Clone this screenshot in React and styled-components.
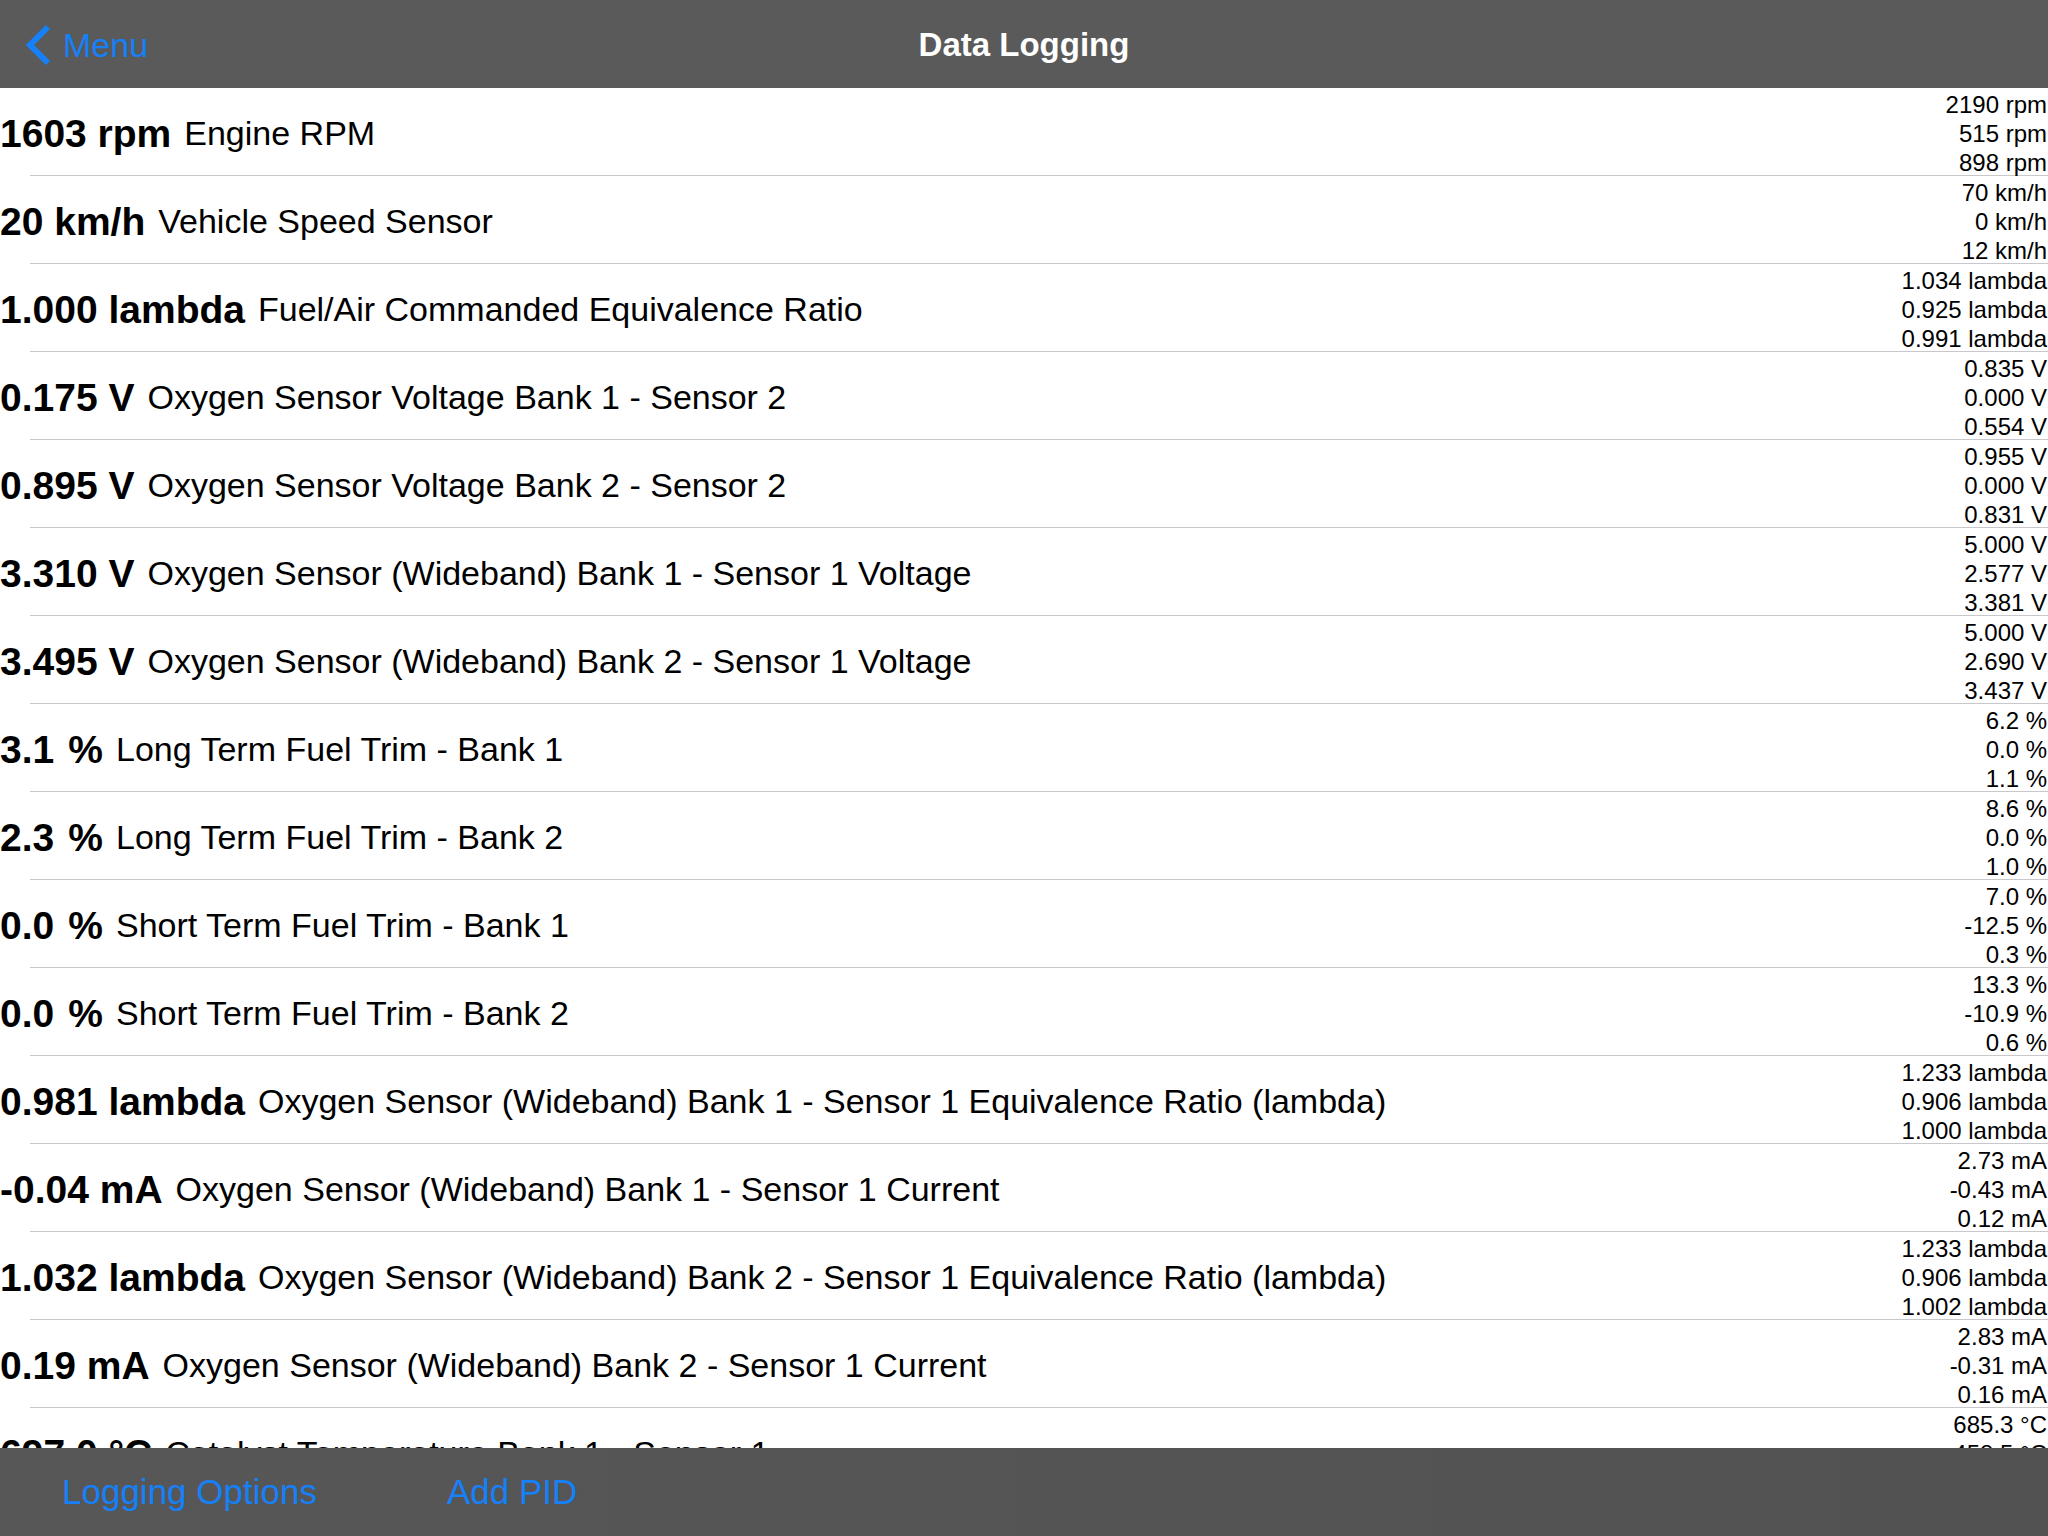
import React from "react";
import styled, { createGlobalStyle } from "styled-components";

const GlobalStyle = createGlobalStyle`
  html, body {
    margin: 0;
    padding: 0;
    background: #ffffff;
  }
  body {
    font-family: "Liberation Sans", Helvetica, Arial, sans-serif;
    color: #000;
    overflow: hidden;
  }
  * { box-sizing: border-box; }
`;

const Screen = styled.div`
  width: 100vw;
  height: 100vh;
  display: flex;
  flex-direction: column;
  overflow: hidden;
`;

const NavBar = styled.header`
  flex: 0 0 88px;
  height: 88px;
  background: #5a5a5a;
  display: grid;
  grid-template-columns: 1fr auto 1fr;
  align-items: center;
`;

const BackButton = styled.button`
  justify-self: start;
  display: flex;
  align-items: center;
  gap: 11px;
  padding: 2px 0 0 24px;
  margin: 0;
  border: 0;
  background: none;
  color: #1580f8;
  font-family: inherit;
  font-size: 34px;
  cursor: pointer;
`;

const Title = styled.h1`
  margin: 0;
  padding-top: 2px;
  color: #ffffff;
  font-size: 33px;
  font-weight: 700;
`;

const List = styled.main`
  flex: 1 1 auto;
  min-height: 0;
  overflow: hidden;
  background: #ffffff;
`;

const Row = styled.div`
  height: 88px;
  display: flex;
  align-items: stretch;
  background: linear-gradient(#c8c7cc, #c8c7cc) no-repeat 30px 100% / calc(100% - 30px) 1px;
`;

const Reading = styled.div`
  flex: 1 1 auto;
  min-width: 0;
  display: flex;
  align-items: center;
  white-space: nowrap;
  overflow: hidden;
  padding-top: 3px;
`;

const Value = styled.span`
  font-size: 39px;
  font-weight: 700;
`;

const Label = styled.span`
  margin-left: 13px;
  font-size: 34px;
`;

const Stats = styled.div`
  flex: 0 0 auto;
  display: flex;
  flex-direction: column;
  justify-content: flex-start;
  padding: 3px 1px 0 0;
  text-align: right;
  font-size: 24px;
  line-height: 28.8px;
  white-space: nowrap;
`;

const ToolBar = styled.footer`
  flex: 0 0 88px;
  height: 88px;
  background: linear-gradient(90deg, #575757, #545454 60%, #525252);
  display: flex;
  align-items: center;
  gap: 130px;
  padding-left: 62px;
`;

const ToolButton = styled.button`
  margin: 0;
  padding: 0;
  border: 0;
  background: none;
  color: #1580f8;
  font-family: inherit;
  font-size: 35px;
  cursor: pointer;
`;

const BackChevron = () => (
  <svg width="28" height="42" viewBox="0 0 28 42" aria-hidden="true">
    <path d="M24 3 L6 21 L24 39" fill="none" stroke="#1580f8" strokeWidth="6" />
  </svg>
);

const readings = [
  { value: "1603 rpm", label: "Engine RPM", stats: ["2190 rpm", "515 rpm", "898 rpm"] },
  { value: "20 km/h", label: "Vehicle Speed Sensor", stats: ["70 km/h", "0 km/h", "12 km/h"] },
  { value: "1.000 lambda", label: "Fuel/Air Commanded Equivalence Ratio", stats: ["1.034 lambda", "0.925 lambda", "0.991 lambda"] },
  { value: "0.175 V", label: "Oxygen Sensor Voltage Bank 1 - Sensor 2", stats: ["0.835 V", "0.000 V", "0.554 V"] },
  { value: "0.895 V", label: "Oxygen Sensor Voltage Bank 2 - Sensor 2", stats: ["0.955 V", "0.000 V", "0.831 V"] },
  { value: "3.310 V", label: "Oxygen Sensor (Wideband) Bank 1 - Sensor 1 Voltage", stats: ["5.000 V", "2.577 V", "3.381 V"] },
  { value: "3.495 V", label: "Oxygen Sensor (Wideband) Bank 2 - Sensor 1 Voltage", stats: ["5.000 V", "2.690 V", "3.437 V"] },
  { value: "3.1 \u200A%", label: "Long Term Fuel Trim - Bank 1", stats: ["6.2 %", "0.0 %", "1.1 %"] },
  { value: "2.3 \u200A%", label: "Long Term Fuel Trim - Bank 2", stats: ["8.6 %", "0.0 %", "1.0 %"] },
  { value: "0.0 \u200A%", label: "Short Term Fuel Trim - Bank 1", stats: ["7.0 %", "-12.5 %", "0.3 %"] },
  { value: "0.0 \u200A%", label: "Short Term Fuel Trim - Bank 2", stats: ["13.3 %", "-10.9 %", "0.6 %"] },
  { value: "0.981 lambda", label: "Oxygen Sensor (Wideband) Bank 1 - Sensor 1 Equivalence Ratio (lambda)", stats: ["1.233 lambda", "0.906 lambda", "1.000 lambda"] },
  { value: "-0.04 mA", label: "Oxygen Sensor (Wideband) Bank 1 - Sensor 1 Current", stats: ["2.73 mA", "-0.43 mA", "0.12 mA"] },
  { value: "1.032 lambda", label: "Oxygen Sensor (Wideband) Bank 2 - Sensor 1 Equivalence Ratio (lambda)", stats: ["1.233 lambda", "0.906 lambda", "1.002 lambda"] },
  { value: "0.19 mA", label: "Oxygen Sensor (Wideband) Bank 2 - Sensor 1 Current", stats: ["2.83 mA", "-0.31 mA", "0.16 mA"] },
  { value: "697.0 °C", label: "Catalyst Temperature Bank 1 - Sensor 1", stats: ["685.3 °C", "458.5 °C", "602.0 °C"] },
];

export default function App() {
  return (
    <>
      <GlobalStyle />
      <Screen>
        <NavBar>
          <BackButton>
            <BackChevron />
            Menu
          </BackButton>
          <Title>Data Logging</Title>
          <span />
        </NavBar>
        <List>
          {readings.map((r, i) => (
            <Row key={i}>
              <Reading>
                <Value>{r.value}</Value>
                <Label>{r.label}</Label>
              </Reading>
              <Stats>
                {r.stats.map((s, j) => (
                  <span key={j}>{s}</span>
                ))}
              </Stats>
            </Row>
          ))}
        </List>
        <ToolBar>
          <ToolButton>Logging Options</ToolButton>
          <ToolButton>Add PID</ToolButton>
        </ToolBar>
      </Screen>
    </>
  );
}
